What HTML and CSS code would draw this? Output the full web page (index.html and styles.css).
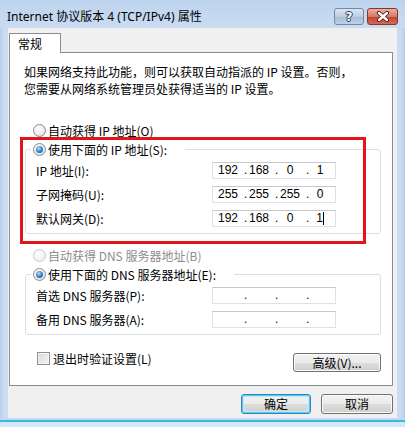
FILE: index.html
```html
<!DOCTYPE html>
<html lang="zh-CN">
<head>
<meta charset="utf-8">
<title>Internet 协议版本 4 (TCP/IPv4) 属性</title>
<link rel="stylesheet" href="styles.css">
</head>
<body>
<div class="window">
  <div class="titlebar">
    <span class="title">Internet 协议版本 4 (TCP/IPv4) 属性</span>
    <div class="caption-btns">
      <span class="cbtn help">?</span>
      <span class="cbtn close">
        <svg width="14" height="11" viewBox="0 0 14 11">
          <path d="M3 2 L11 9 M11 2 L3 9" stroke="#4a1a14" stroke-width="4.2" stroke-linecap="round" fill="none"/>
          <path d="M3 2 L11 9 M11 2 L3 9" stroke="#ffffff" stroke-width="2.4" stroke-linecap="round" fill="none"/>
        </svg>
      </span>
    </div>
  </div>
  <div class="client">
    <div class="tabs"><div class="tab">常规</div></div>
    <div class="panel">
      <p class="desc"><span class="line">如果网络支持此功能，则可以获取自动指派的 IP 设置。否则，</span><span class="line">您需要从网络系统管理员处获得适当的 IP 设置。</span></p>

      <div class="radio-row first"><span class="radio"></span><span>自动获得 IP 地址(O)</span></div>

      <fieldset class="group">
        <legend><span class="legend-in"><span class="radio checked"></span><span>使用下面的 IP 地址(S):</span></span></legend>
        <div class="rows">
          <div class="field">
            <span class="label">IP 地址(I):</span>
            <div class="ipbox"><span class="oct o1">192</span><span class="dot">.</span><span class="oct">168</span><span class="dot">.</span><span class="oct">0</span><span class="dot">.</span><span class="oct o4">1</span></div>
          </div>
          <div class="field">
            <span class="label">子网掩码(U):</span>
            <div class="ipbox"><span class="oct o1">255</span><span class="dot">.</span><span class="oct">255</span><span class="dot">.</span><span class="oct">255</span><span class="dot">.</span><span class="oct o4">0</span></div>
          </div>
          <div class="field">
            <span class="label">默认网关(D):</span>
            <div class="ipbox"><span class="oct o1">192</span><span class="dot">.</span><span class="oct">168</span><span class="dot">.</span><span class="oct">0</span><span class="dot">.</span><span class="oct o4">1<span class="caret"></span></span></div>
          </div>
        </div>
      </fieldset>

      <div class="radio-row disabled"><span class="radio"></span><span>自动获得 DNS 服务器地址(B)</span></div>

      <fieldset class="group">
        <legend><span class="legend-in"><span class="radio checked"></span><span>使用下面的 DNS 服务器地址(E):</span></span></legend>
        <div class="rows">
          <div class="field">
            <span class="label">首选 DNS 服务器(P):</span>
            <div class="ipbox"><span class="oct o1"></span><span class="dot">.</span><span class="oct"></span><span class="dot">.</span><span class="oct"></span><span class="dot">.</span><span class="oct o4"></span></div>
          </div>
          <div class="field">
            <span class="label">备用 DNS 服务器(A):</span>
            <div class="ipbox"><span class="oct o1"></span><span class="dot">.</span><span class="oct"></span><span class="dot">.</span><span class="oct"></span><span class="dot">.</span><span class="oct o4"></span></div>
          </div>
        </div>
      </fieldset>

      <div class="check-row">
        <label class="check"><span class="checkbox"></span><span>退出时验证设置(L)</span></label>
        <button class="btn adv">高级(V)...</button>
      </div>

      <div class="red-mark"></div>
    </div>
    <div class="footer">
      <button class="btn ok">确定</button>
      <button class="btn cancel">取消</button>
    </div>
  </div>
  <div class="bottom-frame"></div>
</div>
</body>
</html>
```

FILE: styles.css
```css
* { box-sizing: border-box; }
html, body { margin: 0; padding: 0; }
body {
  width: 405px;
  height: 427px;
  overflow: hidden;
  font-family: "Noto Sans CJK SC", "Noto Sans", sans-serif;
  font-size: 12px;
  color: #000;
  background: #c9dcf2;
}
.window {
  width: 405px;
  height: 427px;
  display: flex;
  flex-direction: column;
  background: linear-gradient(to right, #b7cfea 0, #cadcf2 4px, #cadcf2 400px, #b7cfea 405px);
}
.titlebar {
  height: 28px;
  flex: none;
  display: flex;
  align-items: flex-start;
  justify-content: space-between;
  padding: 0 7px;
  background: linear-gradient(to bottom, #bdd3ed, #cadcf2);
}
.title {
  margin-top: 9px;
  line-height: 16px;
  font-family: "Noto Sans", "Noto Sans CJK SC", sans-serif;
  font-size: 12px;
  color: #000;
}
.caption-btns {
  display: flex;
  gap: 3px;
  margin-top: 8px;
}
.cbtn {
  height: 17px;
  border-radius: 3px;
  display: flex;
  align-items: center;
  justify-content: center;
}
.help {
  width: 30px;
  border: 1px solid #7488a6;
  background: linear-gradient(#dbe5f1, #bccde3 50%, #a7bcd8 51%, #bcd0e8);
  color: #fff;
  font: bold 12px "DejaVu Sans", sans-serif;
  line-height: 1;
  text-shadow: 1px 0 0 #2b3b55, -1px 0 0 #2b3b55, 0 1px 0 #2b3b55, 0 -1px 0 #2b3b55;
}
.close {
  width: 31px;
  border: 1px solid #86362c;
  background: linear-gradient(#eab0a2, #d8786a 50%, #c4402f 51%, #d46a54);
}
.client {
  height: 390px;
  flex: none;
  margin: 0 8px;
  background: #f0f0f0;
  padding-top: 5px;
}
.tabs {
  display: flex;
  padding-left: 1px;
  position: relative;
  z-index: 1;
}
.tab {
  width: 52px;
  height: 20px;
  margin-bottom: -1px;
  border: 1px solid #898c95;
  border-bottom: none;
  background: #fff;
  padding-left: 8px;
  line-height: 20px;
  font-size: 12px;
}
.panel {
  position: relative;
  margin-left: 1px;
  width: 384px;
  height: 334px;
  border: 1px solid #898c95;
  background: #fff;
  padding: 10px 10px 0 14px;
}
.desc {
  margin: 0;
  display: flex;
  flex-direction: column;
  white-space: nowrap;
}
.desc .line {
  display: block;
  height: 17px;
  line-height: 17px;
}
.radio-row {
  display: flex;
  align-items: center;
  gap: 2px;
  height: 16px;
  margin-left: 9px;
}
.radio-row.first { margin-top: 25px; }
.radio-row.disabled { margin-top: 13px; color: #8d8d8d; }
.radio {
  width: 13px;
  height: 13px;
  flex: none;
  border-radius: 50%;
  border: 1px solid #8a8c8e;
  background: radial-gradient(circle at 40% 35%, #ffffff 0, #ececec 55%, #d2d2d2 100%);
  display: inline-flex;
  align-items: center;
  justify-content: center;
}
.radio-row.disabled .radio {
  border-color: #c9cacb;
  background: radial-gradient(circle at 40% 35%, #ffffff 0, #f3f3f3 60%, #e6e6e6 100%);
}
.radio.checked::after {
  content: "";
  width: 7px;
  height: 7px;
  border-radius: 50%;
  background: radial-gradient(circle at 40% 35%, #b7e2ff 0, #3f8fd6 45%, #123f73 100%);
}
.group {
  margin: 3px 0 0 1px;
  width: 356px;
  min-width: 0;
  padding: 0;
  border: 1px solid #d5dfe5;
  border-radius: 3px;
}
.group legend {
  margin-left: 5px;
  padding: 0 18px 0 2px;
  height: 16px;
  background: #fff;
}
.legend-in {
  display: flex;
  align-items: center;
  gap: 2px;
  height: 16px;
}
.rows {
  padding: 5px 0 6px 10px;
  display: flex;
  flex-direction: column;
  gap: 7px;
}
.field {
  display: flex;
  align-items: center;
  height: 17px;
}
.label {
  width: 176px;
  flex: none;
  white-space: nowrap;
}
.ipbox {
  width: 124px;
  height: 17px;
  flex: none;
  display: flex;
  align-items: center;
  border: 1px solid #dde2e7;
  border-top-color: #c4c9cf;
  background: #fff;
  font-family: "Liberation Sans", Arial, sans-serif;
  font-size: 12px;
  line-height: 15px;
}
.oct {
  width: 28px;
  height: 15px;
  text-align: center;
  padding-right: 4px;
  display: flex;
  align-items: center;
  justify-content: center;
}
.oct.o1 { width: 31px; padding-right: 1px; }
.oct.o4 { width: 26px; }
.dot {
  width: 3px;
  text-align: left;
  overflow: visible;
}
.caret {
  display: inline-block;
  width: 1px;
  height: 13px;
  background: #000;
  margin-left: 0;
}
.check-row {
  margin: 15px 0 0 1px;
  width: 356px;
  display: flex;
  justify-content: space-between;
  align-items: flex-start;
}
.check {
  display: flex;
  align-items: center;
  gap: 3px;
  height: 16px;
  margin-left: 12px;
}
.checkbox {
  width: 13px;
  height: 13px;
  border: 1px solid #8f8f8f;
  background: linear-gradient(135deg, #d6d6d6, #f7f7f7);
  box-shadow: inset 0 0 0 1px #f4f4f4;
}
.btn {
  font-family: "Noto Sans CJK SC", "Noto Sans", sans-serif;
  font-size: 12px;
  color: #000;
  height: 20px;
  padding: 0;
  border: 1px solid #707070;
  border-radius: 3px;
  background: linear-gradient(#f2f2f2, #ebebeb 50%, #dddddd 51%, #cfcfcf);
  box-shadow: inset 0 0 0 1px #fcfcfc;
  line-height: 16px;
}
.btn.adv {
  width: 88px;
  height: 19px;
  margin-top: 3px;
  margin-right: 0;
}
.footer {
  display: flex;
  justify-content: flex-end;
  gap: 10px;
  padding-right: 4px;
  margin-top: 8px;
}
.btn.ok {
  width: 70px;
  border-color: #3c7fb1;
  box-shadow: inset 0 0 0 1px #48d2f9, inset 0 0 0 2px #bfe8f7;
}
.btn.cancel { width: 72px; }
.red-mark {
  position: absolute;
  left: 10px;
  top: 84px;
  width: 346px;
  height: 107px;
  border: 3px solid #e0161b;
  pointer-events: none;
}
.bottom-frame {
  flex: 1;
  background: linear-gradient(to bottom, #c4d9f1 0, #c4d9f1 2px, #3ab6e3 2px, #3ab6e3 4px, #d3e8f8 4px);
}
```
